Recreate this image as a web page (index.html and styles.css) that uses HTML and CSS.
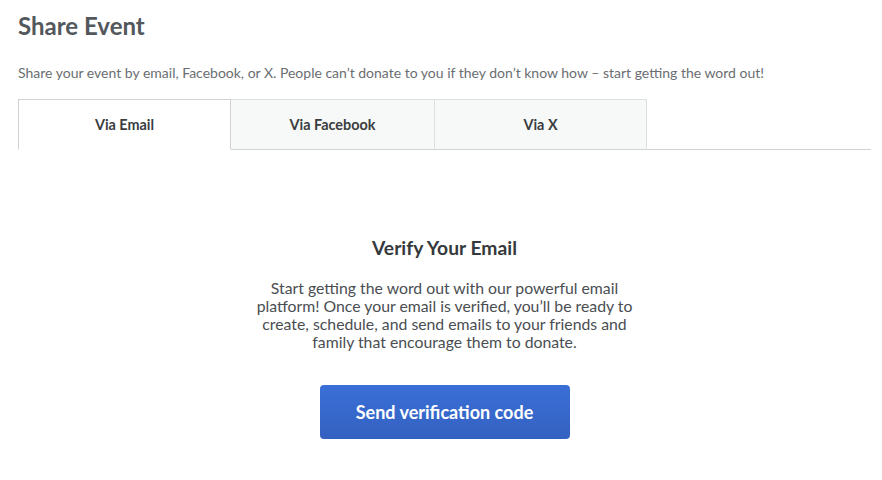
FILE: index.html
```html
<!DOCTYPE html>
<html lang="en">
<head>
    <meta charset="UTF-8">
    <meta name="viewport" content="width=device-width, initial-scale=1.0">
    <title>Share Event</title>
    <link rel="stylesheet" href="styles.css">
</head>
<body>
<div class="page">
    <h1 class="title">Share Event</h1>
    <p class="intro">Share your event by email, Facebook, or X. People can’t donate to you if they don’t know how – start getting the word out!</p>
    <div class="tabs">
        <div class="tab active">Via Email</div>
        <div class="tab">Via Facebook</div>
        <div class="tab">Via X</div>
    </div>
    <div class="panel">
        <h2 class="panel-title">Verify Your Email</h2>
        <p class="panel-text">Start getting the word out with our powerful email platform! Once your email is verified, you’ll be ready to create, schedule, and send emails to your friends and family that encourage them to donate.</p>
        <button class="btn-primary">Send verification code</button>
    </div>
</div>
</body>
</html>
```

FILE: styles.css
```css
body {
    margin: 0;
    font-family: Lato, "Open Sans", Arial, sans-serif;
    background: #fff;
    color: #3a3d40;
}
.page {
    width: 853px;
    padding: 12px 0 0 18px;
}
.title {
    margin: 0;
    font-size: 24px;
    font-weight: 700;
    line-height: 28px;
    color: #53585c;
}
.intro {
    margin: 24px 0 0;
    font-size: 14px;
    line-height: 18px;
    color: #6a6e72;
}
.tabs {
    display: flex;
    margin-top: 17px;
    border-bottom: 1px solid #cfd3d6;
}
.tab {
    height: 49px;
    display: flex;
    align-items: center;
    justify-content: center;
    font-size: 14.4px;
    font-weight: 700;
    color: #3a3d40;
    background: #f7f8f8;
    border-top: 1px solid #dde0e2;
    border-right: 1px solid #dde0e2;
    border-bottom: 1px solid #cfd3d6;
    margin-bottom: -1px;
}
.tab:nth-child(1) { width: 211px; }
.tab:nth-child(2) { width: 203px; }
.tab:nth-child(3) { width: 211px; }
.tab.active {
    background: #fff;
    border-left: 1px solid #cfd3d6;
    border-top-color: #cfd3d6;
    border-right-color: #cfd3d6;
    border-bottom-color: #fff;
}
.panel {
    display: flex;
    flex-direction: column;
    align-items: center;
    padding-top: 86px;
}
.panel-title {
    margin: 0;
    font-size: 19.3px;
    font-weight: 700;
    line-height: 24px;
    color: #36393c;
}
.panel-text {
    margin: 19px 0 0;
    width: 390px;
    text-align: center;
    font-size: 15.8px;
    line-height: 18px;
    color: #4a4e52;
}
.btn-primary {
    margin-top: 34px;
    width: 250px;
    height: 54px;
    border: none;
    border-radius: 4px;
    background: linear-gradient(#3a6fd6, #3461c1);
    color: #fff;
    font-family: inherit;
    font-size: 18px;
    font-weight: 700;
}
```
